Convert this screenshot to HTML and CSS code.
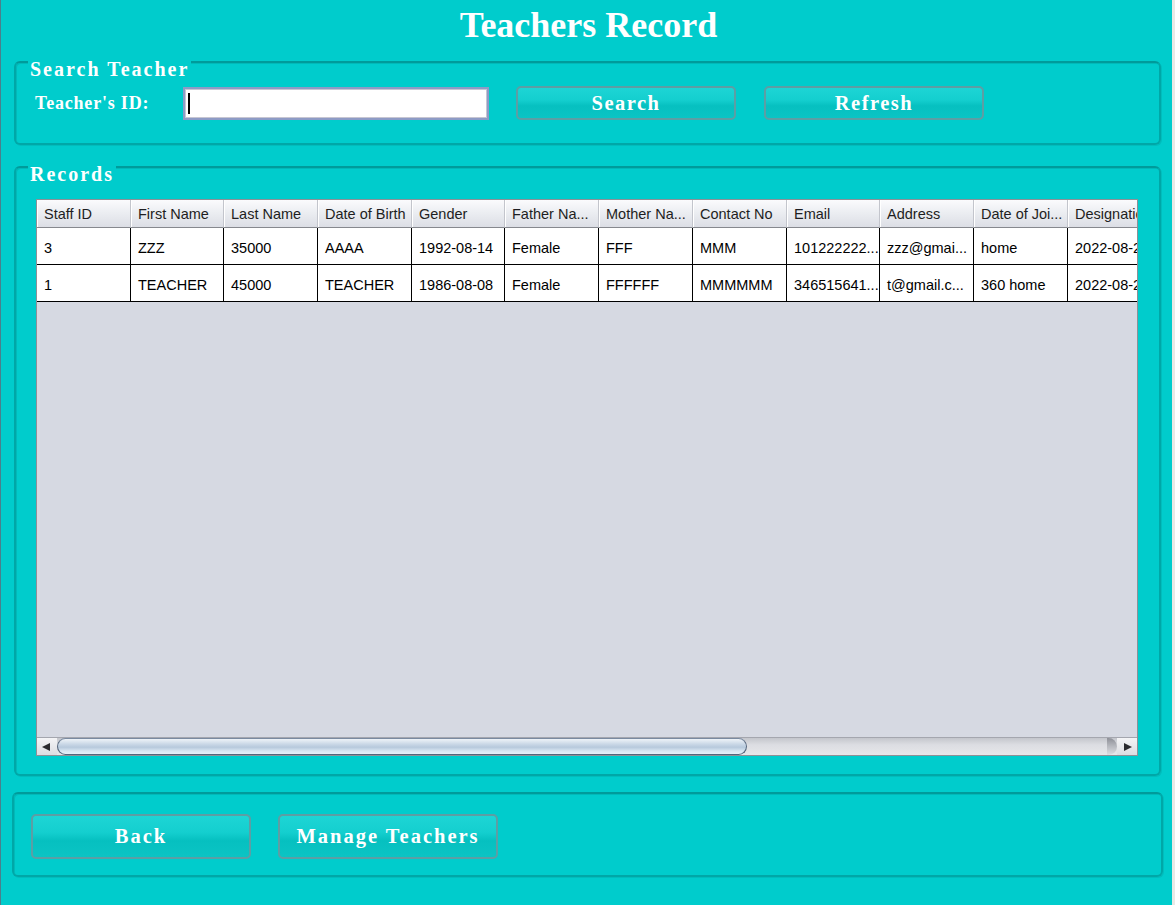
FILE: index.html
```html
<!DOCTYPE html>
<html lang="en">
<head>
<meta charset="utf-8">
<title>Teachers Record</title>
<link rel="stylesheet" href="styles.css">
</head>
<body>
<div class="window">
  <h1 class="title">Teachers Record</h1>

  <section class="panel panel-search">
    <span class="legend">Search Teacher</span>
    <div class="search-row">
      <label class="field-label">Teacher's ID:</label>
      <div class="field"><span class="caret"></span></div>
      <button class="btn btn-small btn-search">Search</button>
      <button class="btn btn-small btn-refresh">Refresh</button>
    </div>
  </section>

  <section class="panel panel-records">
    <span class="legend">Records</span>
    <div class="grid-frame">
      <div class="viewport">
        <table class="records">
          <colgroup>
            <col class="c94"><col class="c93"><col class="c94"><col class="c94"><col class="c93"><col class="c94">
            <col class="c94"><col class="c94"><col class="c93"><col class="c94"><col class="c94"><col class="c94">
          </colgroup>
          <thead>
            <tr>
              <th>Staff ID</th><th>First Name</th><th>Last Name</th><th>Date of Birth</th><th>Gender</th><th>Father Na...</th>
              <th>Mother Na...</th><th>Contact No</th><th>Email</th><th>Address</th><th>Date of Joi...</th><th>Designation</th>
            </tr>
          </thead>
          <tbody>
            <tr>
              <td>3</td><td>ZZZ</td><td>35000</td><td>AAAA</td><td>1992-08-14</td><td>Female</td>
              <td>FFF</td><td>MMM</td><td>101222222...</td><td>zzz@gmai...</td><td>home</td><td>2022-08-25</td>
            </tr>
            <tr>
              <td>1</td><td>TEACHER</td><td>45000</td><td>TEACHER</td><td>1986-08-08</td><td>Female</td>
              <td>FFFFFF</td><td>MMMMMM</td><td>346515641...</td><td>t@gmail.c...</td><td>360 home</td><td>2022-08-25</td>
            </tr>
          </tbody>
        </table>
      </div>
      <div class="hscroll">
        <div class="arrow arrow-left"><span class="tri tri-left"></span></div>
        <div class="track">
          <div class="thumb"></div>
          <div class="track-end"></div>
        </div>
        <div class="arrow arrow-right"><span class="tri tri-right"></span></div>
      </div>
    </div>
  </section>

  <section class="panel panel-actions">
    <button class="btn btn-wide">Back</button>
    <button class="btn btn-wide">Manage Teachers</button>
  </section>
</div>
</body>
</html>
```

FILE: styles.css
```css
html, body {
  margin: 0;
  padding: 0;
}

body {
  background: #e9e9e6;
  width: 1175px;
  height: 905px;
  overflow: hidden;
}

.window {
  width: 1171px;
  height: 905px;
  background: #00cccc;
  border-left: 1px solid #4a7f8c;
  font-family: "Liberation Serif", "Times New Roman", serif;
  color: #ffffff;
}

.title {
  margin: 0;
  height: 61px;
  box-sizing: border-box;
  padding-top: 5px;
  padding-left: 4px;
  line-height: 40px;
  font-size: 36px;
  font-weight: bold;
  text-align: center;
}

.panel {
  position: relative;
  box-sizing: border-box;
  border: 2px solid #00a7a7;
  border-top-color: #009a9a;
  border-radius: 6px;
  box-shadow: inset 1px 1px 0 #00b9b9, 1px 1px 0 #00bdbd;
}

.legend {
  position: absolute;
  top: -6px;
  left: 12px;
  padding: 0 2px;
  background: #00cccc;
  font-size: 20px;
  line-height: 24px;
  font-weight: bold;
  letter-spacing: 2px;
  white-space: nowrap;
}

/* search panel */
.panel-search {
  margin-left: 13px;
  width: 1147px;
  height: 84px;
  padding: 23px 0 0 19px;
}

.search-row {
  display: flex;
  align-items: center;
  height: 34px;
}

.field-label {
  width: 148px;
  font-size: 18px;
  font-weight: bold;
  letter-spacing: 0.8px;
  padding-top: 1px;
}

.field {
  box-sizing: border-box;
  width: 306px;
  height: 33px;
  margin-top: 1px;
  background: #ffffff;
  border: 2px solid #8d9bc6;
  box-shadow: inset 0 0 0 1px #c6c6d2;
  display: flex;
  align-items: center;
  padding-left: 3px;
}

.caret {
  display: block;
  width: 2px;
  height: 21px;
  background: #000000;
}

.btn {
  box-sizing: border-box;
  width: 220px;
  padding: 0;
  border: 2px solid #5d9ea4;
  border-radius: 5px;
  background: linear-gradient(#1dd5d5 0%, #14cfcf 40%, #06c0c0 60%, #0bc4c4 100%);
  color: #ffffff;
  font-family: "Liberation Serif", "Times New Roman", serif;
  font-weight: bold;
  font-size: 20.5px;
  cursor: pointer;
}

.btn-small {
  height: 34px;
  letter-spacing: 1.5px;
}

.btn-search {
  margin-left: 27px;
}

.btn-refresh {
  margin-left: 28px;
}

/* records panel */
.panel-records {
  margin-left: 13px;
  margin-top: 21px;
  width: 1147px;
  height: 610px;
  padding: 31px 0 0 20px;
}

.grid-frame {
  box-sizing: border-box;
  width: 1102px;
  height: 557px;
  border: 1px solid #8e9096;
  background: #d6d9e2;
  display: flex;
  flex-direction: column;
}

.viewport {
  flex: 1;
  overflow: hidden;
}

.records {
  table-layout: fixed;
  width: 1125px;
  border-collapse: separate;
  border-spacing: 0;
  font-family: "Liberation Sans", Arial, sans-serif;
  font-size: 14.5px;
  color: #000000;
}

.c94 { width: 94px; }
.c93 { width: 93px; }

.records th,
.records td {
  box-sizing: border-box;
  text-align: left;
  font-weight: normal;
  white-space: nowrap;
  overflow: hidden;
  padding: 0 4px 0 7px;
}

.records th {
  height: 28px;
  color: #1e1e22;
  background: linear-gradient(#fbfbfd 0%, #eceef2 45%, #dcdee5 100%);
  border-right: 1px solid #c3c5cc;
  border-bottom: 1px solid #86888e;
  box-shadow: inset 1px 0 0 #ffffff;
  padding-top: 1px;
}

.records td {
  height: 37px;
  background: #ffffff;
  border-right: 1px solid #000000;
  border-bottom: 1px solid #000000;
  padding-top: 3px;
}

/* horizontal scrollbar */
.hscroll {
  height: 18px;
  display: flex;
  border-top: 1px solid #a4a6ae;
  box-sizing: border-box;
  background: linear-gradient(#c4c6cc, #dcdde2 40%, #e6e7ea);
}

.arrow {
  width: 20px;
  height: 17px;
  display: flex;
  align-items: center;
  justify-content: center;
  background: linear-gradient(#f4f4f6, #dcdde2);
}

.tri {
  width: 0;
  height: 0;
  border-top: 4px solid transparent;
  border-bottom: 4px solid transparent;
}

.tri-left {
  border-right: 8px solid #2a2a2e;
  margin-right: 2px;
}

.tri-right {
  border-left: 8px solid #2a2a2e;
  margin-left: 2px;
}

.track {
  flex: 1;
  display: flex;
}

.thumb {
  box-sizing: border-box;
  width: 690px;
  height: 17px;
  border: 1px solid #55657c;
  border-top-color: #7a8aa0;
  border-radius: 9px;
  background: linear-gradient(#eef3f8 0%, #c9d7e6 35%, #b7c9dc 55%, #d8e6f2 80%, #e6f0f8 100%);
}

.track-end {
  margin-left: auto;
  width: 10px;
  height: 17px;
  border-radius: 0 9px 9px 0;
  background: linear-gradient(#8e9098, #b8bac0 50%, #dcdde2);
}

/* actions panel */
.panel-actions {
  margin-left: 11px;
  margin-top: 16px;
  width: 1151px;
  height: 85px;
  padding: 20px 0 0 17px;
  display: flex;
  align-items: flex-start;
  gap: 27px;
}

.btn-wide {
  height: 45px;
  letter-spacing: 2px;
}
```
